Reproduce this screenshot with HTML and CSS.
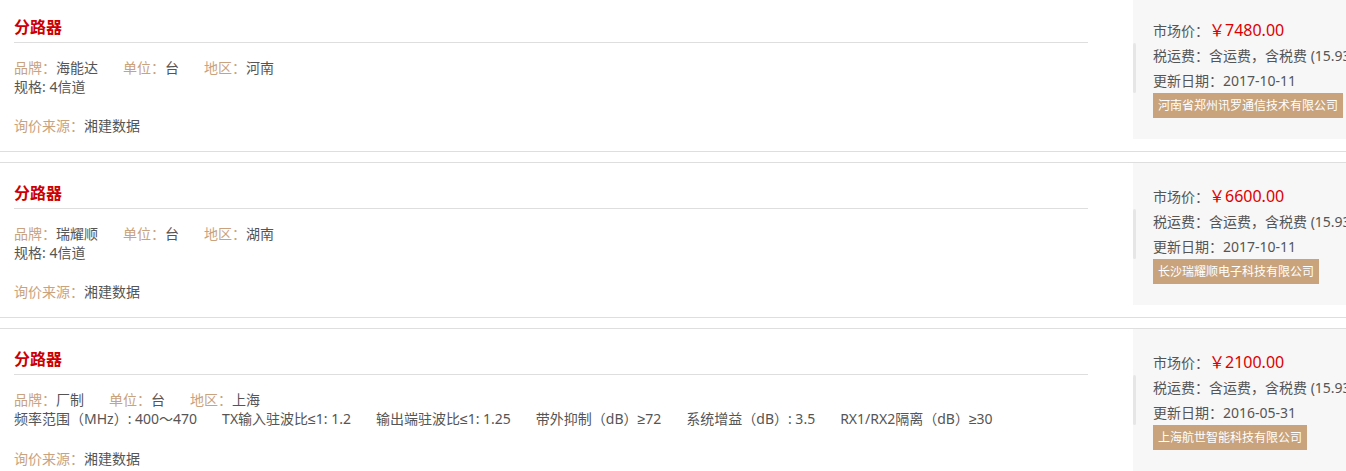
FILE: index.html
```html
<!DOCTYPE html>
<html lang="zh-CN">
<head>
<meta charset="utf-8">
<title>分路器</title>
<link rel="stylesheet" href="styles.css">
</head>
<body>
<div class="list">
  <div class="card">
    <div class="main">
      <h2 class="title">分路器</h2>
      <div class="row">
        <span class="item"><span class="lbl">品牌：</span>海能达</span>
        <span class="item"><span class="lbl">单位：</span>台</span>
        <span class="item"><span class="lbl">地区：</span>河南</span>
      </div>
      <div class="row">
        <span class="item">规格: 4信道</span>
      </div>
      <div class="row source"><span class="lbl">询价来源：</span>湘建数据</div>
    </div>
    <div class="side">
      <div class="strip"></div>
      <div class="info">
        <div class="line">市场价：<span class="price">￥7480.00</span></div>
        <div class="line">税运费：含运费，含税费 (15.93%)</div>
        <div class="line">更新日期：2017-10-11</div>
        <span class="company">河南省郑州讯罗通信技术有限公司</span>
      </div>
    </div>
  </div>

  <div class="card">
    <div class="main">
      <h2 class="title">分路器</h2>
      <div class="row">
        <span class="item"><span class="lbl">品牌：</span>瑞耀顺</span>
        <span class="item"><span class="lbl">单位：</span>台</span>
        <span class="item"><span class="lbl">地区：</span>湖南</span>
      </div>
      <div class="row">
        <span class="item">规格: 4信道</span>
      </div>
      <div class="row source"><span class="lbl">询价来源：</span>湘建数据</div>
    </div>
    <div class="side">
      <div class="strip"></div>
      <div class="info">
        <div class="line">市场价：<span class="price">￥6600.00</span></div>
        <div class="line">税运费：含运费，含税费 (15.93%)</div>
        <div class="line">更新日期：2017-10-11</div>
        <span class="company">长沙瑞耀顺电子科技有限公司</span>
      </div>
    </div>
  </div>

  <div class="card">
    <div class="main">
      <h2 class="title">分路器</h2>
      <div class="row">
        <span class="item"><span class="lbl">品牌：</span>厂制</span>
        <span class="item"><span class="lbl">单位：</span>台</span>
        <span class="item"><span class="lbl">地区：</span>上海</span>
      </div>
      <div class="row">
        <span class="item">频率范围（MHz）: 400～470</span>
        <span class="item">TX输入驻波比<span class="sym">≤</span>1: 1.2</span>
        <span class="item">输出端驻波比<span class="sym">≤</span>1: 1.25</span>
        <span class="item">带外抑制（dB）<span class="sym">≥</span>72</span>
        <span class="item">系统增益（dB）: 3.5</span>
        <span class="item">RX1/RX2隔离（dB）<span class="sym">≥</span>30</span>
      </div>
      <div class="row source"><span class="lbl">询价来源：</span>湘建数据</div>
    </div>
    <div class="side">
      <div class="strip"></div>
      <div class="info">
        <div class="line">市场价：<span class="price">￥2100.00</span></div>
        <div class="line">税运费：含运费，含税费 (15.93%)</div>
        <div class="line">更新日期：2016-05-31</div>
        <span class="company">上海航世智能科技有限公司</span>
      </div>
    </div>
  </div>
</div>
</body>
</html>
```

FILE: styles.css
```css
html, body {
  margin: 0;
  padding: 0;
  overflow: hidden;
  background: #fff;
}

body {
  font-family: "Noto Sans", "Noto Sans CJK TC", "Noto Sans CJK SC", sans-serif;
  font-size: 14px;
  color: #555;
}

.list {
  width: 1366px;
  margin-top: -4px;
}

.card {
  display: flex;
  align-items: flex-start;
  gap: 45px;
  height: 154px;
  border-top: 1px solid #dedede;
  border-bottom: 1px solid #dedede;
  margin-bottom: 10px;
}

.main {
  width: 1074px;
  margin-left: 14px;
  padding-top: 15px;
}

.title {
  margin: 0;
  font-size: 16px;
  font-weight: bold;
  line-height: 30px;
  color: #cc0000;
  border-bottom: 1px solid #dedede;
}

.row {
  display: flex;
  gap: 25px;
  line-height: 19px;
  white-space: nowrap;
}

.title + .row {
  margin-top: 15px;
}

.row.source {
  display: block;
  margin-top: 20px;
}

.lbl {
  color: #c9a27e;
}

.sym {
  font-family: "Liberation Sans", "DejaVu Sans", sans-serif;
}

.side {
  flex: none;
  width: 233px;
  height: 142px;
  background: #f7f7f7;
  display: flex;
}

.strip {
  flex: none;
  width: 3px;
  height: 50px;
  margin-top: 46px;
  background: #e6e6e6;
  border-radius: 2px;
}

.info {
  padding: 21px 0 0 17px;
  white-space: nowrap;
}

.line {
  line-height: 25px;
  height: 25px;
}

.price {
  color: #dd0000;
  font-size: 16px;
}

.company {
  display: inline-block;
  height: 25px;
  line-height: 25px;
  padding: 0 5px;
  font-size: 12px;
  color: #fff;
  background: #c8a37c;
}
```
